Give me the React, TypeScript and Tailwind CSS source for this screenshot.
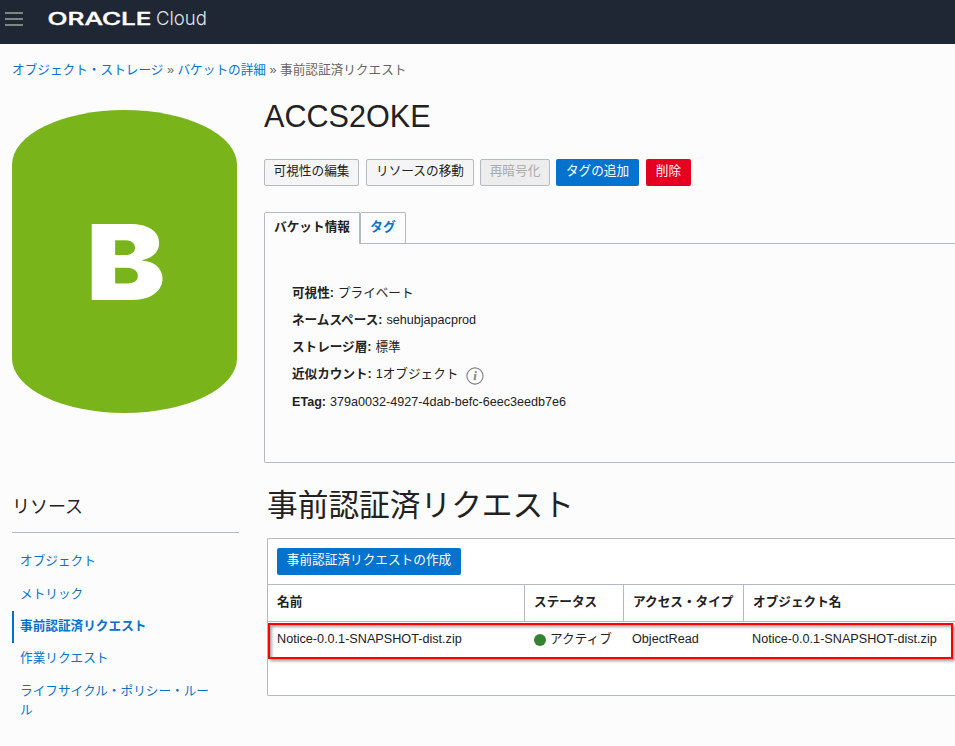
import type { ReactNode } from "react";

const crumbs = ["オブジェクト・ストレージ", "バケットの詳細"];

const details: { label: string; value: string; info?: boolean; h: string }[] = [
  { label: "可視性:", value: "プライベート", h: "h-[27px]" },
  { label: "ネームスペース:", value: "sehubjapacprod", h: "h-[27px]" },
  { label: "ストレージ層:", value: "標準", h: "h-[27px]" },
  { label: "近似カウント:", value: "1オブジェクト", info: true, h: "h-[27px]" },
  { label: "ETag:", value: "379a0032-4927-4dab-befc-6eec3eedb7e6", h: "h-[28px]" },
];

function Header() {
  return (
    <header className="flex h-[44px] items-start bg-[#1e2733]">
      <button aria-label="menu" className="mt-[12px] ml-[5px] flex w-[18px] flex-col gap-[4px]">
        <span className="h-[2px] w-full bg-[#7d8486]" />
        <span className="h-[2px] w-full bg-[#7d8486]" />
        <span className="h-[2px] w-full bg-[#7d8486]" />
      </button>
      <svg className="ml-[25px]" width="170" height="36" viewBox="0 0 170 36">
        <text x="-0.5" y="24.8" fill="#fff" stroke="#fff" strokeWidth="0.4" fontFamily="Inter, sans-serif" fontWeight="500" fontSize="17.4" textLength="104" lengthAdjust="spacingAndGlyphs">ORACLE</text>
        <text x="108" y="25" fill="#e3e5e7" fontFamily="Inter, sans-serif" fontWeight="300" fontSize="19" textLength="51" lengthAdjust="spacingAndGlyphs">Cloud</text>
      </svg>
    </header>
  );
}

function Button({ kind = "plain", w, children }: { kind?: "plain" | "disabled" | "primary" | "danger"; w: string; children: ReactNode }) {
  const look = {
    plain: "border border-[#b4b9c2] bg-[#f5f5f5] text-[#222]",
    disabled: "border border-[#b4b9c2] bg-[#ededed] text-[#aaa]",
    primary: "bg-[#0572ce] text-white",
    danger: "bg-[#e6001f] text-white",
  }[kind];
  return (
    <button className={`flex h-[27px] shrink-0 items-center justify-center rounded-[2px] pb-[2px] whitespace-nowrap ${w} ${look}`}>
      {children}
    </button>
  );
}

function InfoIcon() {
  return (
    <svg className="mt-[3px] ml-[8px]" width="18" height="18" viewBox="0 0 18 18">
      <circle cx="9" cy="9" r="8.1" fill="none" stroke="#808080" strokeWidth="1.1" />
      <text x="9" y="13.3" textAnchor="middle" fontFamily="Liberation Serif, serif" fontStyle="italic" fontWeight="700" fontSize="13" fill="#808080">i</text>
    </svg>
  );
}

function SideLink({ active, h, children }: { active?: boolean; h: string; children: ReactNode }) {
  return (
    <a className={`flex items-center border-l-2 pl-[6px] ${h} ${active ? "border-[#0572ce] font-bold" : "border-transparent"}`}>
      {children}
    </a>
  );
}

function Sidebar() {
  return (
    <aside className="w-[227px] shrink-0">
      <div className="mt-[16px] flex h-[303px] w-[225px] items-center justify-center rounded-[50%/18%] bg-[#78b41a]">
        <svg className="overflow-visible" width="90" height="140" viewBox="0 0 90 140">
          <text x="6.3" y="108" fill="#fff" fontFamily="Inter, sans-serif" fontWeight="900" fontSize="104.5" textLength="79" lengthAdjust="spacingAndGlyphs">B</text>
        </svg>
      </div>
      <h2 className="mt-[80px] flex h-[40px] items-start border-b border-[#b4b9c2] text-[18px] leading-[28px] text-[#222]">リソース</h2>
      <nav className="mt-[11px] text-[12.65px] text-[#0572ce]">
        <SideLink h="h-[34px]">オブジェクト</SideLink>
        <SideLink h="h-[33px]">メトリック</SideLink>
        <SideLink h="h-[32px] pb-px" active>事前認証済リクエスト</SideLink>
        <SideLink h="h-[32px] pb-px">作業リクエスト</SideLink>
        <SideLink h="h-[52px]"><span className="w-[193px] leading-[19px] break-all">ライフサイクル・ポリシー・ルール</span></SideLink>
      </nav>
    </aside>
  );
}

function BucketPanel() {
  return (
    <section>
      <div className="flex h-[32px]">
        <div className="flex w-[97px] items-center justify-center rounded-t-[2px] border-x border-t border-r-2 border-[#b4b9c2] pb-[2px] font-bold">バケット情報</div>
        <div className="flex w-[45px] items-center justify-center rounded-tr-[2px] border-t border-r border-b border-[#b4b9c2] pb-px font-bold text-[#0572ce]">タグ</div>
        <div className="grow border-b border-[#b4b9c2]" />
      </div>
      <div className="h-[219px] rounded-bl-[2px] border-b border-l border-[#b4b9c2] pt-[36px] pl-[27px] text-[12.6px]">
        {details.map((d) => (
          <div key={d.label} className={`flex items-center whitespace-nowrap ${d.h}`}>
            <b className="mr-[4px]">{d.label}</b>
            <span>{d.value}</span>
            {d.info && <InfoIcon />}
          </div>
        ))}
      </div>
    </section>
  );
}

function RequestTable() {
  return (
    <section className="relative ml-[3px] h-[158px] rounded-l-[2px] border-y border-l border-[#b4b9c2] bg-white">
      <div className="h-[45px] pt-[9px] pl-[9px]">
        <Button kind="primary" w="w-[184px]">事前認証済リクエストの作成</Button>
      </div>
      <div className="grid h-[38px] grid-cols-[257px_99px_120px_1fr] border-y border-[#b4b9c2] font-bold whitespace-nowrap">
        <div className="flex items-center border-r border-[#b4b9c2] pb-px pl-[9px]">名前</div>
        <div className="flex items-center border-r border-[#b4b9c2] pb-px pl-[9px]">ステータス</div>
        <div className="flex items-center border-r border-[#b4b9c2] pb-px pl-[9px]">アクセス・タイプ</div>
        <div className="flex items-center pb-px pl-[9px]">オブジェクト名</div>
      </div>
      <div className="grid h-[35px] grid-cols-[257px_99px_120px_1fr] whitespace-nowrap">
        <div className="flex items-center pl-[9px]">Notice-0.0.1-SNAPSHOT-dist.zip</div>
        <div className="flex items-center pl-[9px]">
          <span className="mr-[4px] size-[12px] rounded-full bg-[#338333]" />アクティブ
        </div>
        <div className="flex items-center pl-[8px]">ObjectRead</div>
        <div className="flex items-center pl-[8px]">Notice-0.0.1-SNAPSHOT-dist.zip</div>
      </div>
      <div className="absolute top-[84px] right-[2px] left-0 h-[36px] border-2 border-[#fa0000] shadow-[2px_2px_3px_rgba(0,0,0,0.4),inset_2px_2px_3px_rgba(0,0,0,0.35)]" />
    </section>
  );
}

export default function App() {
  return (
    <div className="h-[746px] w-[955px] overflow-hidden bg-[#fcfcfc] font-['Liberation_Sans','Noto_Sans_CJK_JP',sans-serif] text-[12.65px] leading-[19px] text-[#222]">
      <Header />
      <nav className="flex h-[50px] items-center gap-[3.5px] pt-[3px] pl-[12px] text-[#666]">
        {crumbs.map((c) => (
          <span key={c} className="flex gap-[3.5px]"><a className="text-[#0572ce]">{c}</a><span>»</span></span>
        ))}
        <span>事前認証済リクエスト</span>
      </nav>
      <div className="flex pl-[12px]">
        <Sidebar />
        <main className="ml-[25px] min-w-0 grow">
          <h1 className="mt-[4px] h-[61px] text-[30.6px] leading-[36px]">ACCS2OKE</h1>
          <div className="mb-[26px] flex">
            <Button w="w-[95px] mr-[7px]">可視性の編集</Button>
            <Button w="w-[108px] mr-[6px]">リソースの移動</Button>
            <Button kind="disabled" w="w-[70px] mr-[6px]">再暗号化</Button>
            <Button kind="primary" w="w-[83px] mr-[7px]">タグの追加</Button>
            <Button kind="danger" w="w-[45px]">削除</Button>
          </div>
          <BucketPanel />
          <h2 className="mt-[25px] mb-[10px] ml-[3px] h-[40px] text-[30.7px] leading-[36px]">事前認証済リクエスト</h2>
          <RequestTable />
        </main>
      </div>
    </div>
  );
}
